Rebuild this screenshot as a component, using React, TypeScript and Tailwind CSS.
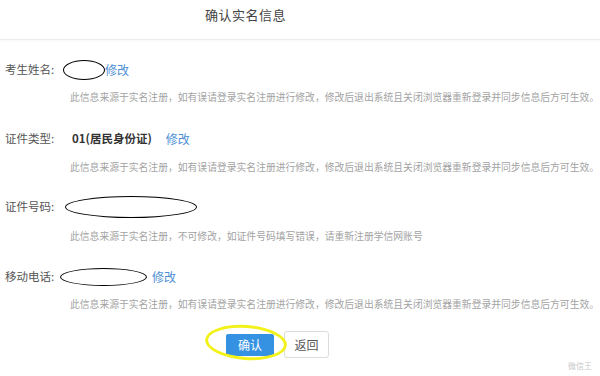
import React from 'react';

const font = { fontFamily: '"Noto Sans CJK SC", "Noto Sans", sans-serif' };

function Note({ children }: { children: React.ReactNode }) {
  return (
    <p className="pl-[65px] h-4 leading-4 text-[9.8px] text-[#a3a3a3] whitespace-nowrap">
      {children}
    </p>
  );
}

function Link() {
  return <span className="text-[12px] text-[#4f8fd6]">修改</span>;
}

export default function App() {
  return (
    <div className="w-[600px] h-[376px] bg-white overflow-hidden relative" style={font}>
      {/* header */}
      <div className="h-10 border-b border-[#ececec] shadow-[0_1px_2px_rgba(0,0,0,0.03)] flex items-start pt-[5px] pl-[205px]">
        <h1 className="text-[13px] leading-5 text-[#444] tracking-[0.5px]">确认实名信息</h1>
      </div>

      <div className="px-[5px]">
        {/* name */}
        <div className="mt-[20px] h-5 flex items-center text-[11.5px] text-[#555]">
          <span className="w-[58px]">考生姓名:</span>
          <span className="w-[42px] h-[20px] border-[1.5px] border-black rounded-[50%]" />
          <Link />
        </div>
        <div className="mt-[9px]">
          <Note>此信息来源于实名注册，如有误请登录实名注册进行修改，修改后退出系统且关闭浏览器重新登录并同步信息后方可生效。</Note>
        </div>

        {/* id type */}
        <div className="mt-[24px] h-5 flex items-center text-[11.5px] text-[#555]">
          <span className="w-[67px]">证件类型:</span>
          <span className="text-[#333] font-semibold mr-[14px]">01(居民身份证)</span>
          <Link />
        </div>
        <div className="mt-[10px]">
          <Note>此信息来源于实名注册，如有误请登录实名注册进行修改，修改后退出系统且关闭浏览器重新登录并同步信息后方可生效。</Note>
        </div>

        {/* id number */}
        <div className="mt-[22px] h-5 flex items-center text-[11.5px] text-[#555]">
          <span className="w-[60px]">证件号码:</span>
          <span className="w-[132px] h-[22px] border-[1.5px] border-black rounded-[50%]" />
        </div>
        <div className="mt-[11px]">
          <Note>此信息来源于实名注册，不可修改，如证件号码填写错误，请重新注册学信网账号</Note>
        </div>

        {/* phone */}
        <div className="mt-[23px] h-5 flex items-center text-[11.5px] text-[#555]">
          <span className="w-[55px]">移动电话:</span>
          <span className="w-[87px] h-[18px] border-[1.5px] border-black rounded-[50%] mr-[5px]" />
          <Link />
        </div>
        <div className="mt-[9px]">
          <Note>此信息来源于实名注册，如有误请登录实名注册进行修改，修改后退出系统且关闭浏览器重新登录并同步信息后方可生效。</Note>
        </div>

        {/* buttons */}
        <div className="mt-[19px] flex items-start pl-[221px] gap-[10px]">
          <div className="relative">
            <button className="w-[48px] h-[22px] bg-[#3592e2] text-white text-[12px] rounded-[2px]">确认</button>
            <span className="absolute left-[-21px] top-[-6px] w-[82px] h-[35px] border-[3px] border-[#f2f21a] rounded-[50%] rotate-[4deg]" />
          </div>
          <button className="w-[45px] h-[27px] bg-white border border-[#dcdcdc] text-[#555] text-[12px] rounded-[3px]">返回</button>
        </div>
      </div>

      <span className="absolute right-[8px] bottom-[4px] text-[8px] text-[#c8c8c8]">微信王</span>
    </div>
  );
}
